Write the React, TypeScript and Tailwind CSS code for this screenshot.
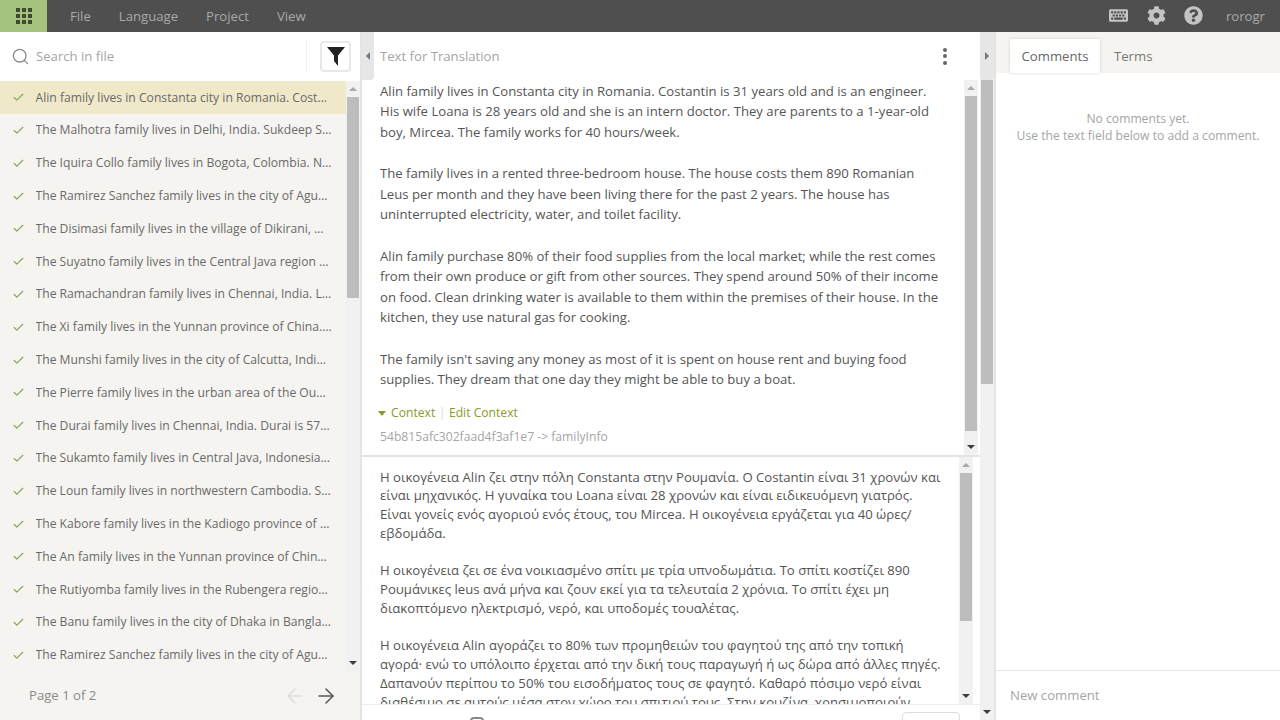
import { Check, ArrowLeft, ArrowRight, Search } from "lucide-react"
import { FaCog, FaKeyboard, FaQuestionCircle } from "react-icons/fa"

const files = [
  "Alin family lives in Constanta city in Romania. Costantin is 31",
  "The Malhotra family lives in Delhi, India. Sukdeep Singh is 41",
  "The Iquira Collo family lives in Bogota, Colombia. Nestor is 44",
  "The Ramirez Sanchez family lives in the city of Aguascalientes",
  "The Disimasi family lives in the village of Dikirani, Mtwara",
  "The Suyatno family lives in the Central Java region of Indonesia",
  "The Ramachandran family lives in Chennai, India. Lakshmi is 40",
  "The Xi family lives in the Yunnan province of China. Xi is 36",
  "The Munshi family lives in the city of Calcutta, India. Raju is",
  "The Pierre family lives in the urban area of the Ouest region",
  "The Durai family lives in Chennai, India. Durai is 57 years old",
  "The Sukamto family lives in Central Java, Indonesia. Sukamto is",
  "The Loun family lives in northwestern Cambodia. Sok is 35 years",
  "The Kabore family lives in the Kadiogo province of Burkina Faso",
  "The An family lives in the Yunnan province of China. An is 41",
  "The Rutiyomba family lives in the Rubengera region of Rwanda",
  "The Banu family lives in the city of Dhaka in Bangladesh. Banu",
  "The Ramirez Sanchez family lives in the city of Aguascalientes",
]

const sourceText = [
  "Alin family lives in Constanta city in Romania. Costantin is 31 years old and is an engineer. His wife Loana is 28 years old and she is an intern doctor. They are parents to a 1-year-old boy, Mircea. The family works for 40 hours/week.",
  "The family lives in a rented three-bedroom house. The house costs them 890 Romanian Leus per month and they have been living there for the past 2 years. The house has uninterrupted electricity, water, and toilet facility.",
  "Alin family purchase 80% of their food supplies from the local market; while the rest comes from their own produce or gift from other sources. They spend around 50% of their income on food. Clean drinking water is available to them within the premises of their house. In the kitchen, they use natural gas for cooking.",
  "The family isn't saving any money as most of it is spent on house rent and buying food supplies. They dream that one day they might be able to buy a boat.",
]

const targetText = [
  "Η οικογένεια Alin ζει στην πόλη Constanta στην Ρουμανία. Ο Costantin είναι 31 χρονών και είναι μηχανικός. Η γυναίκα του Loana είναι 28 χρονών και είναι ειδικευόμενη γιατρός. Είναι γονείς ενός αγοριού ενός έτους, του Mircea. Η οικογένεια εργάζεται για 40 ώρες/εβδομάδα.",
  "Η οικογένεια ζει σε ένα νοικιασμένο σπίτι με τρία υπνοδωμάτια. Το σπίτι κοστίζει 890 Ρουμάνικες leus ανά μήνα και ζουν εκεί για τα τελευταία 2 χρόνια. Το σπίτι έχει μη διακοπτόμενο ηλεκτρισμό, νερό, και υποδομές τουαλέτας.",
  "Η οικογένεια Alin αγοράζει το 80% των προμηθειών του φαγητού της από την τοπική αγορά· ενώ το υπόλοιπο έρχεται από την δική τους παραγωγή ή ως δώρα από άλλες πηγές. Δαπανούν περίπου το 50% του εισοδήματος τους σε φαγητό. Καθαρό πόσιμο νερό είναι διαθέσιμο σε αυτούς μέσα στον χώρο του σπιτιού τους. Στην κουζίνα, χρησιμοποιούν",
]

function Scrollbar({ height, className }: { height: string; className: string }) {
  return (
    <div className={`flex flex-col items-center shrink-0 w-[14px] bg-[#f1f1f1] ${className}`}>
      <div className="h-[16px] flex items-center justify-center shrink-0">
        <div className="w-0 h-0 border-x-[4px] border-x-transparent border-b-[4px] border-b-[#a8a8a8]" />
      </div>
      <div className={`w-[12px] bg-[#bdbdbd] shrink-0 ${height}`} />
      <div className="flex-1" />
      <div className="h-[16px] flex items-center justify-center shrink-0">
        <div className="w-0 h-0 border-x-[4px] border-x-transparent border-t-[4px] border-t-[#3c3c3c]" />
      </div>
    </div>
  )
}

export default function App() {
  return (
    <div className="h-[720px] w-[1280px] overflow-hidden flex flex-col bg-white text-[#666] font-['Open_Sans',sans-serif]">
      {/* top bar */}
      <div className="h-8 shrink-0 bg-[#4f4f4f] flex items-center text-[#a9a9a9] text-[13.15px]">
        <div className="w-[47px] h-8 bg-[#a5c27f] flex items-center justify-center">
          <svg width="16" height="16" viewBox="0 0 16 16" fill="#3f4a2f">
            <rect x="0" y="0" width="4" height="4" /><rect x="6" y="0" width="4" height="4" /><rect x="12" y="0" width="4" height="4" />
            <rect x="0" y="6" width="4" height="4" /><rect x="6" y="6" width="4" height="4" /><rect x="12" y="6" width="4" height="4" />
            <rect x="0" y="12" width="4" height="4" /><rect x="6" y="12" width="4" height="4" /><rect x="12" y="12" width="4" height="4" />
          </svg>
        </div>
        <div className="flex gap-[28px] ml-[23px] pt-px">
          <span>File</span>
          <span>Language</span>
          <span>Project</span>
          <span>View</span>
        </div>
        <div className="ml-auto flex items-center mr-[15px]">
          <FaKeyboard size={19} className="mr-[19px] text-[#c4c4c4]" />
          <FaCog size={19} className="mr-[18px] text-[#c4c4c4]" />
          <FaQuestionCircle size={19} className="mr-[23px] text-[#c4c4c4]" />
          <span className="pt-px">rorogr</span>
        </div>
      </div>

      <div className="flex-1 flex min-h-0">
        {/* file list */}
        <div className="w-[362px] shrink-0 flex flex-col bg-[#f5f4f0] border-r-2 border-r-[#e4e4e4]">
          <div className="h-[49px] shrink-0 bg-white flex items-center pl-[11px] pr-[9px]">
            <Search size={19} className="text-[#8c8c8c] shrink-0" strokeWidth={1.7} />
            <span className="ml-[6px] text-[13.15px] text-[#a5a5a5]">Search in file</span>
            <div className="ml-auto w-px h-8 bg-[#eee] mr-[13px]" />
            <div className="w-[31px] h-[31px] border-2 border-[#e8e8e8] rounded-sm flex items-center justify-center">
              <svg width="18" height="19" viewBox="0 0 18 19" fill="#222"><path d="M0 0h18L11 8.5V19L7 14V8.5z" /></svg>
            </div>
          </div>
          <div className="flex-1 flex min-h-0">
            <div className="flex-1 min-w-0 pt-[0.4px]">
              {files.map((f, i) => (
                <div key={i} className={`h-[32.8px] flex items-center pl-3 pr-[14px] text-[12.15px] ${i === 0 ? "bg-[#efe8c9]" : ""}`}>
                  <Check size={13} className="text-[#7ea650] shrink-0" />
                  <span className="ml-[10.5px] truncate text-[#6a6a6a]">{f}</span>
                </div>
              ))}
            </div>
            <Scrollbar height="h-[201px]" className="" />
          </div>
          <div className="h-[49px] shrink-0 flex items-center pl-[29px] pr-[22px] text-[13.15px] text-[#8a8a8a]">
            <span>Page 1 of 2</span>
            <ArrowLeft size={24} strokeWidth={1.5} className="ml-auto text-[#ddd]" />
            <ArrowRight size={24} strokeWidth={1.5} className="ml-[7px] text-[#555]" />
          </div>
        </div>

        {/* translation editor */}
        <div className="w-[618px] shrink-0 flex flex-col min-h-0">
          <div className="h-[48px] shrink-0 flex items-center pr-[33px]">
            <div className="w-[12px] h-[48px] bg-[#e6e6e6] rounded-br-sm flex items-center justify-center shrink-0">
              <div className="w-0 h-0 border-y-[4px] border-y-transparent border-r-[4px] border-r-[#777]" />
            </div>
            <span className="ml-[6px] pt-[2px] text-[13.15px] text-[#a5a5a5]">Text for Translation</span>
            <div className="ml-auto flex flex-col gap-[2.5px]">
              <div className="w-[4px] h-[4px] rounded-full bg-[#666]" />
              <div className="w-[4px] h-[4px] rounded-full bg-[#666]" />
              <div className="w-[4px] h-[4px] rounded-full bg-[#666]" />
            </div>
          </div>
          <div className="h-[377px] shrink-0 flex border-b-2 border-b-[#e4e4e4]">
            <div className="flex-1 min-w-0 pl-[18px] pr-[19px] pt-[0.85px] text-[13.15px] leading-[20.6px] text-[#555]">
              {sourceText.map((p, i) => (
                <p key={i} className="mb-[20.6px]">{p}</p>
              ))}
              <div className="-mt-[7px] -ml-[2px] flex items-center text-[12.15px] text-[#8a9a2c]">
                <div className="w-0 h-0 border-x-[4px] border-x-transparent border-t-[5px] border-t-[#8a9a2c] mr-[5px]" />
                <span>Context</span>
                <span className="mx-[3.5px] text-[#ddd]">|</span>
                <span>Edit Context</span>
              </div>
              <div className="mt-[3px] text-[12.15px] text-[#a5a5a5]">54b815afc302faad4f3af1e7 -&gt; familyInfo</div>
            </div>
            <Scrollbar height="h-[335px]" className="mr-[2px]" />
          </div>
          <div className="h-[247px] shrink-0 flex">
            <div className="flex-1 min-w-0 overflow-hidden pl-[18px] pr-[18px] pt-[10.7px] text-[13.15px] leading-[18.75px] text-[#555]">
              {targetText.map((p, i) => (
                <p key={i} className="mb-[18.75px]">{p}</p>
              ))}
            </div>
            <Scrollbar height="h-[148px]" className="mr-[7px]" />
          </div>
          <div className="flex-1 flex items-start border-t border-t-[#eee] pr-[20px]">
            <div className="mt-[12px] ml-[108px] w-[14px] h-[10px] border-2 border-[#888] rounded-sm" />
            <div className="mt-[7px] ml-auto w-[58px] h-8 border border-[#ddd] rounded-sm" />
          </div>
        </div>

        {/* outer scrollbar */}
        <div className="w-[14px] shrink-0 flex flex-col bg-[#f1f1f1] items-center">
          <div className="h-[48px] w-[14px] bg-[#e6e6e6] flex items-center justify-center shrink-0 rounded-b-sm">
            <div className="w-0 h-0 border-y-[4px] border-y-transparent border-l-[4px] border-l-[#777]" />
          </div>
          <div className="h-[304px] w-[12px] bg-[#bdbdbd] shrink-0" />
          <div className="flex-1" />
          <div className="h-[16px] flex items-center justify-center">
            <div className="w-0 h-0 border-x-[4px] border-x-transparent border-t-[4px] border-t-[#3c3c3c]" />
          </div>
        </div>

        {/* comments */}
        <div className="flex-1 min-w-0 flex flex-col border-l-2 border-l-[#e4e4e4]">
          <div className="h-[41px] shrink-0 bg-[#f5f4f0] flex items-end pl-[14px] text-[13.15px] pt-[7px]">
            <div className="h-[34px] w-[90px] pt-[2px] bg-white flex items-center justify-center shadow-[0_0_3px_rgba(0,0,0,0.15)]">Comments</div>
            <div className="h-[34px] pt-[2px] pl-[14px] flex items-center text-[#777]">Terms</div>
          </div>
          <div className="flex-1 pt-[37px] text-center text-[12.15px] leading-[17px] text-[#a5a5a5]">
            <p>No comments yet.</p>
            <p>Use the text field below to add a comment.</p>
          </div>
          <div className="h-[50px] shrink-0 border-t border-t-[#e6e6e6] flex items-center pl-[14px] text-[13.15px] text-[#a5a5a5]">New comment</div>
        </div>
      </div>
    </div>
  )
}
